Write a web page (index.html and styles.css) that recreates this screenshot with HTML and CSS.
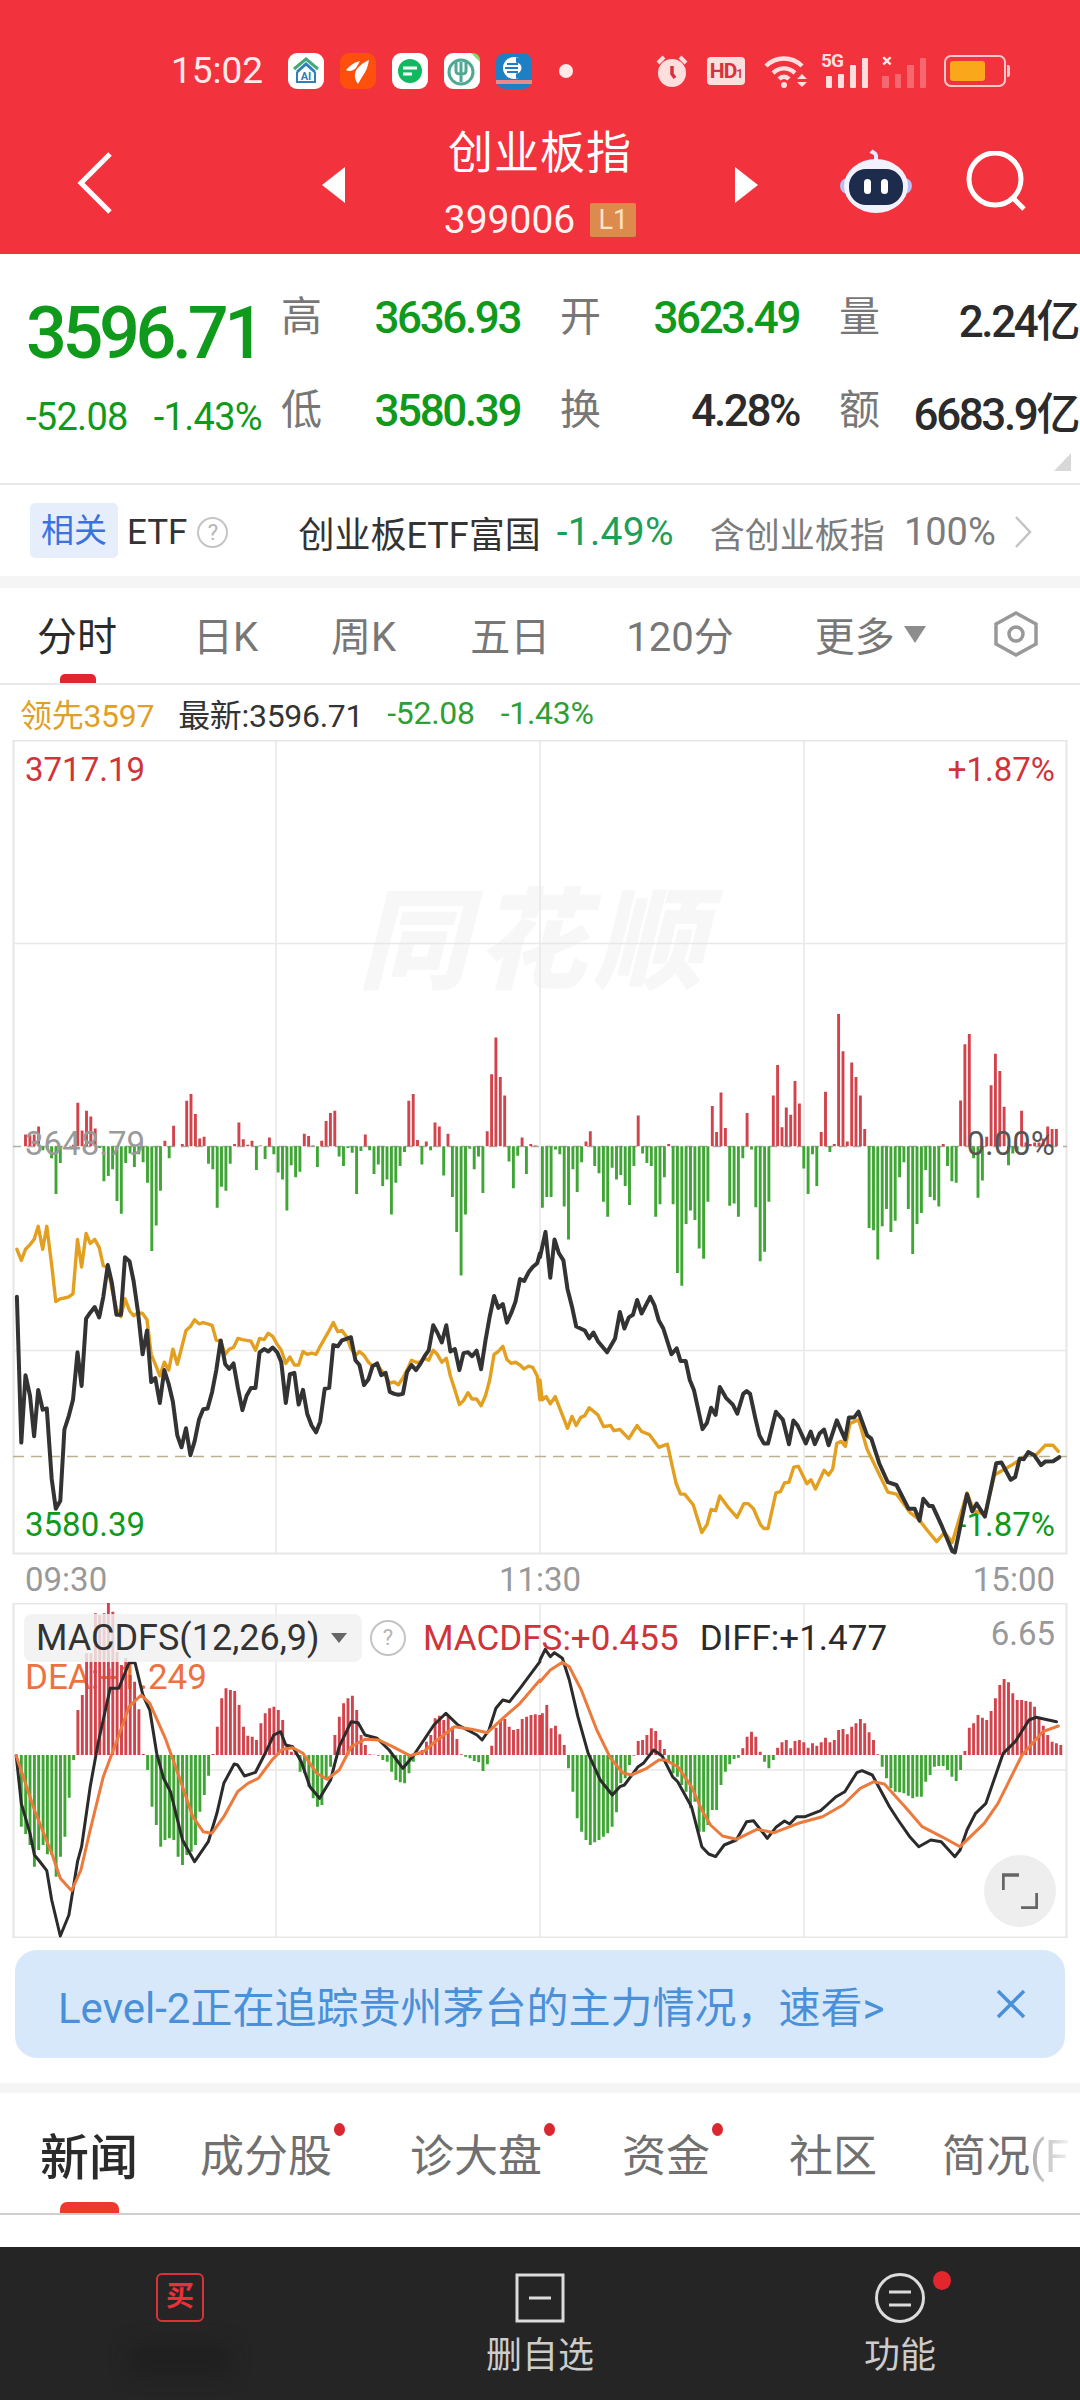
FILE: index.html
```html
<!DOCTYPE html>
<html lang="zh-CN">
<head>
  <meta charset="UTF-8">
  <meta name="viewport" content="width=device-width, initial-scale=1.0">
  <title>创业板指</title>
  <link rel="stylesheet" href="styles.css">
</head>
<body>

  <div class="header">
    <div class="status-bar">
      <span class="status-time">15:02</span>
      <div class="app-icons">
        <svg class="app-icon" viewBox="0 0 36 36">
          <rect class="i-white" width="36" height="36" rx="9"/>
          <path class="i-roof-green" d="M6 16 18 6l12 10"/>
          <path class="i-roof-blue" d="M9 19 18 11l9 8"/>
          <path class="i-box" d="M9 19v10h18V19"/>
          <text class="i-ai" x="18" y="27" text-anchor="middle">AI</text>
        </svg>
        <svg class="app-icon" viewBox="0 0 36 36">
          <rect class="i-orange" width="36" height="36" rx="9"/>
          <path class="i-white" d="M6 17c4-5 9-8 14-9l-4 7c-3 3-7 4-10 2Z"/>
          <path class="i-white" d="M18 31c-4-5-4-11-1-15 3-4 7-7 12-9-1 6-3 12-7 17Z"/>
        </svg>
        <svg class="app-icon" viewBox="0 0 36 36">
          <rect class="i-white" width="36" height="36" rx="9"/>
          <circle class="i-green" cx="18" cy="18" r="12"/>
          <path class="i-bar" d="M11 15h14M11 21h9"/>
        </svg>
        <svg class="app-icon" viewBox="0 0 36 36">
          <rect class="i-white" width="36" height="36" rx="9"/>
          <circle class="i-ring" cx="17" cy="19" r="12"/>
          <path class="i-ring" d="M17 9v20M12 9v9c0 2 2 3 5 3s5-1 5-3V9"/>
          <path class="i-corner" d="M27 0h2a7 7 0 0 1 7 7v2Z"/>
        </svg>
        <svg class="app-icon" viewBox="0 0 36 36">
          <rect class="i-blue" width="36" height="36" rx="9"/>
          <circle class="i-white" cx="18" cy="15" r="11"/>
          <path class="i-swirl" d="M11 11h11M9 15h13M11 19h11"/>
          <path class="i-blue-arc" d="M20 7a8 8 0 0 1 0 16"/>
          <rect class="i-strip" y="27" width="36" height="4"/>
        </svg>
      </div>
      <span class="status-dot"></span>
      <div class="status-right">
        <svg class="st-alarm" viewBox="0 0 32 34">
          <circle class="st-fill" cx="16" cy="19" r="14"/>
          <path class="st-hand" d="M16 12v8l3 4"/>
          <path class="st-ear" d="M2 9 8 3M30 9l-6-6"/>
        </svg>
        <span class="st-hd">HD<small>1</small></span>
        <svg class="st-wifi" viewBox="0 0 45 34">
          <path class="st-arc" d="M2 12C12 2 28 2 38 12"/>
          <path class="st-arc" d="M9 19c7-6 15-6 22 0"/>
          <path class="st-arc" d="M15 25c3-3 7-3 10 0"/>
          <circle class="st-fill" cx="20" cy="31" r="3"/>
          <path class="st-fill" d="M38 20l5 5H33ZM33 28h10l-5 5Z"/>
        </svg>
        <div class="st-signal">
          <span class="st-label">5G</span>
          <i class="s1"></i><i class="s2"></i><i class="s3"></i><i class="s4"></i>
        </div>
        <div class="st-signal off">
          <span class="st-label">×</span>
          <i class="s1"></i><i class="s2"></i><i class="s3"></i><i class="s4"></i>
        </div>
        <div class="st-battery"><span class="st-level"></span></div>
      </div>
    </div>

    <div class="nav-bar">
      <svg class="nav-back" viewBox="0 0 36 64"><path d="M33 3 4 32l29 29"/></svg>
      <div class="nav-center">
        <span class="tri-left"></span>
        <div class="nav-title">
          <div class="stock-name">创业板指</div>
          <div class="stock-code">399006<span class="level-tag">L1</span></div>
        </div>
        <span class="tri-right"></span>
      </div>
      <div class="nav-actions">
        <svg class="robot" viewBox="0 0 72 66">
          <path class="r-ant" d="M36 14V8c0-3-3-3-5-5"/>
          <rect class="r-ear" x="0" y="30" width="72" height="16" rx="8"/>
          <ellipse class="r-head" cx="36" cy="38" rx="32" ry="27"/>
          <rect class="r-face" x="9" y="21" width="54" height="36" rx="17"/>
          <rect class="r-eye" x="24" y="31" width="7" height="15" rx="3.5"/>
          <rect class="r-eye" x="41" y="31" width="7" height="15" rx="3.5"/>
        </svg>
        <svg class="search" viewBox="0 0 60 60"><circle cx="29" cy="28" r="26"/><path d="M47 47l11 11"/></svg>
      </div>
    </div>
  </div>

  <div class="quote">
    <div class="quote-left">
      <div class="price">3596.71</div>
      <div class="change"><span>-52.08</span><span>-1.43%</span></div>
    </div>
    <div class="quote-grid">
      <div class="cell"><span class="lbl">高</span><span class="val green">3636.93</span></div>
      <div class="cell"><span class="lbl">开</span><span class="val green">3623.49</span></div>
      <div class="cell"><span class="lbl">量</span><span class="val">2.24亿</span></div>
      <div class="cell"><span class="lbl">低</span><span class="val green">3580.39</span></div>
      <div class="cell"><span class="lbl">换</span><span class="val">4.28%</span></div>
      <div class="cell"><span class="lbl">额</span><span class="val">6683.9亿</span></div>
    </div>
    <span class="corner-mark"></span>
  </div>

  <div class="etf-row">
    <span class="etf-tag">相关</span>
    <span class="etf-word">ETF</span>
    <span class="help etf-help">?</span>
    <span class="etf-name">创业板ETF富国</span>
    <span class="etf-pct">-1.49%</span>
    <span class="etf-hold">含创业板指</span>
    <span class="etf-share">100%</span>
    <svg class="etf-arrow" viewBox="0 0 20 32"><path d="M3 1l14 15L3 31"/></svg>
  </div>

  <div class="gap"></div>

  <div class="period-tabs">
    <span class="period active">分时</span>
    <span class="period p-day">日K</span>
    <span class="period p-week">周K</span>
    <span class="period p-five">五日</span>
    <span class="period p-120">120分</span>
    <span class="period p-more">更多<i class="more-tri"></i></span>
    <svg class="hex" viewBox="0 0 46 46">
      <path d="M23 2 43 13v20L23 44 3 33V13Z"/>
      <circle cx="23" cy="23" r="7"/>
    </svg>
  </div>

  <div class="info-line">
    <span class="lead">领先3597</span>
    <span class="latest">最新:3596.71</span>
    <span class="info-down">-52.08</span>
    <span class="info-pct">-1.43%</span>
  </div>

  <div class="chart chart-main">
    <div class="watermark">同花顺</div>
    <span class="tag under-line tag-low-pct">-1.87%</span>
    <svg id="mainChart" class="chart-svg" viewBox="0 740 1080 815">
      <rect class="frame" x="13.5" y="740.5" width="1053" height="813"/>
      <path class="grid" d="M276 740V1554M540 740V1554M804 740V1554M13 943.5H1067M13 1350.5H1067"/>
      <path class="mid-line" d="M13 1146.5H1067"/>
      <path class="dash-line" d="M13 1456.5H1067"/>
    </svg>
    <span class="tag tag-high">3717.19</span>
    <span class="tag tag-high-pct">+1.87%</span>
    <span class="tag tag-mid">3648.79</span>
    <span class="tag tag-mid-pct">0.00%</span>
    <span class="tag tag-low">3580.39</span>
  </div>

  <div class="time-axis">
    <span>09:30</span>
    <span>11:30</span>
    <span>15:00</span>
  </div>

  <div class="chart chart-macd">
    <span class="macd-dea">DEA:+1.249</span>
    <svg id="macdChart" class="chart-svg" viewBox="0 1603 1080 335">
      <rect class="frame" x="13.5" y="1603.5" width="1053" height="334"/>
      <path class="grid" d="M276 1603V1937M540 1603V1937M804 1603V1937M13 1770H1067"/>
    </svg>
    <div class="macd-head">
      <span class="macd-pill">MACDFS(12,26,9)<i class="pill-tri"></i></span>
      <span class="help macd-help">?</span>
      <span class="macd-val">MACDFS:+0.455</span>
      <span class="macd-diff">DIFF:+1.477</span>
    </div>
    <span class="macd-max">6.65</span>
    <div class="expand">
      <svg viewBox="0 0 36 36"><path d="M1 17V2h16M35 20v15H19"/></svg>
    </div>
  </div>

  <div class="banner">
    <span class="banner-text">Level-2正在追踪贵州茅台的主力情况，速看&gt;</span>
    <svg class="banner-close" viewBox="0 0 30 30"><path d="M2 2l26 26M28 2 2 28"/></svg>
  </div>

  <div class="gap gap-news"></div>

  <div class="news-tabs">
    <span class="news-tab active">新闻</span>
    <span class="news-tab t-stock dot">成分股</span>
    <span class="news-tab t-zhen dot">诊大盘</span>
    <span class="news-tab t-fund dot">资金</span>
    <span class="news-tab t-comm">社区</span>
    <span class="news-tab t-brief">简况<span class="fade">(F</span></span>
  </div>

  <div class="bottom-space"></div>

  <div class="bottom-bar">
    <div class="bottom-item">
      <span class="buy-icon">买</span>
      <span class="smudge"></span>
    </div>
    <div class="bottom-item">
      <svg class="box-icon" viewBox="0 0 50 50"><rect x="2" y="2" width="46" height="46"/><path d="M14 25h22"/></svg>
      <span class="bottom-label">删自选</span>
    </div>
    <div class="bottom-item">
      <svg class="box-icon" viewBox="0 0 50 50"><circle cx="25" cy="25" r="23.5"/><path d="M14 19h22M14 32h22"/></svg>
      <span class="bottom-label">功能</span>
      <span class="bottom-dot"></span>
    </div>
  </div>

  <script src="chart.js"></script>
</body>
</html>
```

FILE: styles.css
```css
:root {
  --red: #f2323c;
  --green: #0f9a1b;
  --dark: #2b2b2b;
  --gray: #7a7a7a;
  --line: #e9e9e9;
  --strip: #f5f5f5;
}

* {
  box-sizing: border-box;
}

body {
  margin: 0;
  width: 1080px;
  height: 2400px;
  overflow: hidden;
  background: #ffffff;
  color: var(--dark);
  font-family: Roboto, "Noto Sans CJK SC", sans-serif;
}

/* header */
.header {
  height: 254px;
  background: var(--red);
  color: #ffffff;
}

.status-bar {
  display: flex;
  align-items: center;
  height: 108px;
  padding: 34px 0 0 171px;
}

.status-time {
  width: 117px;
  font-size: 37px;
  line-height: 40px;
  color: #ffe9e9;
}

.app-icons {
  display: flex;
  gap: 16px;
}

.app-icon {
  width: 36px;
  height: 36px;
}

.i-white { fill: #ffffff; }
.i-orange { fill: #ff4f0c; }
.i-green { fill: #10b95f; }
.i-blue { fill: #1e80c4; }
.i-strip { fill: #e98a8a; }
.i-corner { fill: #8fcf6e; }
.i-bar { stroke: #ffffff; stroke-width: 3; fill: none; }
.i-roof-green { stroke: #45a878; stroke-width: 3; fill: none; }
.i-roof-blue { stroke: #2f7fb8; stroke-width: 3; fill: none; }
.i-box { stroke: #2f7fb8; stroke-width: 2; fill: none; }
.i-ai { fill: #2f7fb8; font-size: 11px; font-weight: 700; }
.i-ring { stroke: #4fa892; stroke-width: 3; fill: none; }
.i-swirl { stroke: #1e80c4; stroke-width: 2; fill: none; }
.i-blue-arc { stroke: #1e80c4; stroke-width: 5; fill: none; }

.status-dot {
  width: 14px;
  height: 14px;
  margin-left: 27px;
  border-radius: 50%;
  background: #ffe9e9;
}

.status-right {
  display: flex;
  align-items: center;
  margin-left: 83px;
}

.st-alarm {
  width: 32px;
  height: 34px;
}

.st-fill { fill: #ffdede; }
.st-hand { stroke: #d8323c; stroke-width: 3.5; fill: none; }
.st-ear { stroke: #ffdede; stroke-width: 4; fill: none; }
.st-arc { stroke: #ffdede; stroke-width: 4.5; fill: none; }

.st-hd {
  width: 38px;
  height: 28px;
  margin-left: 19px;
  border-radius: 4px;
  background: #ffdede;
  color: #d8323c;
  font-size: 21px;
  line-height: 28px;
  font-weight: 700;
  letter-spacing: -1px;
  text-align: center;
}

.st-hd small {
  font-size: 12px;
}

.st-wifi {
  width: 45px;
  height: 34px;
  margin-left: 19px;
}

.st-signal {
  position: relative;
  display: flex;
  align-items: flex-end;
  gap: 6px;
  width: 47px;
  height: 34px;
  margin-left: 12px;
  padding-left: 5px;
  color: #ffdede;
}

.st-signal i {
  display: block;
  width: 6px;
  background: #ffdede;
  border-radius: 1px;
}

.st-signal .s1 { height: 12px; }
.st-signal .s2 { height: 14px; }
.st-signal .s3 { height: 23px; }
.st-signal .s4 { height: 30px; }

.st-label {
  position: absolute;
  top: -3px;
  left: 0;
  font-size: 19px;
  line-height: 20px;
  font-weight: 700;
  letter-spacing: -1px;
}

.st-signal.off {
  margin-left: 14px;
  padding-left: 0;
  gap: 6px;
  color: #ffe9e9;
}

.st-signal.off i {
  width: 6.5px;
  background: rgba(255, 222, 222, 0.32);
}

.st-battery {
  position: relative;
  width: 62px;
  height: 32px;
  margin-left: 15px;
  padding: 4px;
  border: 2px solid #ffc9c9;
  border-radius: 7px;
}

.st-battery::after {
  content: '';
  position: absolute;
  top: 8px;
  right: -6px;
  width: 3px;
  height: 12px;
  border-radius: 0 2px 2px 0;
  background: #ffc9c9;
}

.st-level {
  display: block;
  width: 35px;
  height: 20px;
  border-radius: 3px;
  background: #fba71b;
}

.nav-bar {
  display: grid;
  grid-template-columns: 1fr 436px 1fr;
  align-items: center;
  height: 146px;
  padding: 0 54px;
}

.nav-back {
  width: 36px;
  height: 64px;
  margin: 4px 0 0 23px;
}

.nav-back path,
.search circle,
.search path {
  fill: none;
  stroke: #ffffff;
  stroke-width: 5;
}

.nav-center {
  display: flex;
  align-items: center;
  justify-content: space-between;
}

.tri-left,
.tri-right {
  width: 0;
  height: 0;
  margin-top: 8px;
  border-top: 18px solid transparent;
  border-bottom: 18px solid transparent;
}

.tri-left { border-right: 23px solid #ffffff; }
.tri-right { border-left: 23px solid #ffffff; }

.nav-title {
  display: flex;
  flex-direction: column;
  align-items: center;
  margin-top: -1px;
}

.stock-name {
  font-size: 45px;
  line-height: 62px;
  letter-spacing: 1px;
}

.stock-code {
  display: flex;
  align-items: center;
  gap: 15px;
  font-size: 39px;
  line-height: 36px;
  margin-top: 17px;
  color: #fff2f2;
}

.level-tag {
  width: 46px;
  height: 34px;
  border-radius: 2px;
  background: #dd8b4d;
  color: #ffe2c6;
  font-size: 27px;
  line-height: 34px;
  text-align: center;
}

.nav-actions {
  display: flex;
  align-items: center;
  justify-content: flex-end;
  gap: 54px;
  margin-top: -1px;
}

.robot {
  width: 72px;
  height: 66px;
}

.r-ant { stroke: #e6e8ff; stroke-width: 4; fill: none; }
.r-ear { fill: #b9bdf5; }
.r-head { fill: #f1f1ff; }
.r-face { fill: #1d2b4d; }
.r-eye { fill: #ffffff; }

.search {
  width: 60px;
  height: 60px;
}

/* quote */
.quote {
  position: relative;
  display: flex;
  height: 231px;
  padding: 18px 0 0 26px;
  border-bottom: 2px solid var(--line);
}

.quote-left {
  width: 255px;
  padding-top: 24px;
}

.price {
  font-size: 72px;
  line-height: 76px;
  font-weight: 500;
  letter-spacing: -4.4px;
  color: var(--green);
}

.change {
  display: flex;
  gap: 26px;
  margin-top: 25px;
  color: var(--green);
  font-size: 38px;
  line-height: 40px;
  letter-spacing: -0.7px;
  white-space: nowrap;
}

.quote-grid {
  display: grid;
  grid-template-columns: repeat(3, 239px);
  grid-auto-rows: 93px;
  column-gap: 40px;
}

.cell {
  display: flex;
  align-items: center;
  justify-content: space-between;
  height: 92px;
}

.lbl {
  font-size: 41px;
  line-height: 52px;
  margin-top: -2px;
  color: #777777;
}

.val {
  font-size: 44px;
  font-weight: 500;
  letter-spacing: -2.4px;
  white-space: nowrap;
}

.green {
  color: var(--green);
}

.corner-mark {
  position: absolute;
  right: 9px;
  bottom: 12px;
  width: 0;
  height: 0;
  border-left: 17px solid transparent;
  border-bottom: 18px solid #d8d8d8;
}

/* etf strip */
.etf-row {
  display: flex;
  align-items: center;
  height: 91px;
  padding-left: 30px;
  font-size: 35px;
  white-space: nowrap;
}

.etf-row > span:not(.etf-tag) {
  margin-top: 3px;
}

.etf-tag {
  width: 88px;
  height: 55px;
  border-radius: 5px;
  background: #e6eefb;
  color: #3b72e0;
  line-height: 55px;
  font-size: 33px;
  text-align: center;
}

.etf-word {
  margin-left: 9px;
  color: #333333;
}

.help {
  display: inline-block;
  border: 2px solid #c4c4c4;
  border-radius: 50%;
  color: #b5b5b5;
  text-align: center;
  font-size: 22px;
}

.etf-help {
  width: 31px;
  height: 31px;
  margin-left: 10px;
  line-height: 27px;
}

.etf-name {
  margin-left: 70px;
  font-size: 36px;
  color: #333333;
}

.etf-pct {
  margin-left: 16px;
  font-size: 39px;
  letter-spacing: 0.3px;
  color: #1c9f58;
}

.etf-hold {
  margin-left: 36px;
  color: #7c7c7c;
}

.etf-share {
  margin-left: 19px;
  font-size: 38px;
  color: #7c7c7c;
}

.etf-arrow {
  width: 20px;
  height: 32px;
  margin: 3px 0 0 17px;
}

.etf-arrow path {
  fill: none;
  stroke: #c4c4c4;
  stroke-width: 2.5;
}

.gap {
  height: 12px;
  background: var(--strip);
}

/* period tabs */
.period-tabs {
  position: relative;
  display: flex;
  align-items: center;
  height: 97px;
  padding: 0 0 3px 37px;
  border-bottom: 2px solid var(--line);
}

.period {
  font-size: 40px;
  color: #777777;
  white-space: nowrap;
}

.period.active {
  color: var(--dark);
}

.period.active::after {
  content: '';
  position: absolute;
  left: 60px;
  bottom: 0;
  width: 36px;
  height: 9px;
  border-radius: 5px 5px 0 0;
  background: #e3262e;
}

.p-day { margin-left: 76px; }
.p-week { margin-left: 73px; }
.p-five { margin-left: 74px; }
.p-120 { margin-left: 76px; }
.p-more { margin-left: 81px; }

.more-tri {
  display: inline-block;
  width: 0;
  height: 0;
  margin: 0 0 8px 9px;
  border-left: 11px solid transparent;
  border-right: 11px solid transparent;
  border-top: 17px solid #8d8d8d;
}

.hex {
  width: 46px;
  height: 46px;
  margin-left: 67px;
}

.hex path,
.hex circle {
  fill: none;
  stroke: #999999;
  stroke-width: 3.5;
}

/* info line */
.info-line {
  display: flex;
  align-items: center;
  height: 55px;
  padding-left: 20px;
  font-size: 32px;
  letter-spacing: -0.3px;
  white-space: nowrap;
}

.lead { color: #e0a028; }
.latest { margin-left: 24px; color: #333333; }
.info-down { margin-left: 24px; color: #2f9e34; }
.info-pct { margin-left: 26px; color: #2f9e34; }

/* charts */
.chart {
  position: relative;
  width: 1080px;
}

.chart-main { height: 815px; }
.chart-macd { height: 335px; }

.chart-svg {
  position: absolute;
  top: 0;
  left: 0;
  z-index: 1;
  width: 1080px;
  height: 100%;
}

.frame {
  fill: none;
  stroke: #e6e6e6;
  stroke-width: 2;
}

.grid {
  fill: none;
  stroke: #e8e8e8;
  stroke-width: 1.5;
}

.mid-line {
  fill: none;
  stroke: #a9b0a8;
  stroke-width: 1.5;
  stroke-dasharray: 8 6;
}

.dash-line {
  fill: none;
  stroke: #bdb08c;
  stroke-width: 1.5;
  stroke-dasharray: 11 7;
}

.bar-up {
  fill: none;
  stroke: #d2434b;
  stroke-width: 2.9;
}

.bar-down {
  fill: none;
  stroke: #3fa535;
  stroke-width: 2.9;
}

.line-price,
.line-avg,
.line-diff,
.line-dea {
  fill: none;
  stroke-linejoin: round;
  stroke-linecap: round;
}

.line-price { stroke: #333333; stroke-width: 4; }
.line-avg { stroke: #e3a020; stroke-width: 3.4; }
.line-diff { stroke: #2b2b2b; stroke-width: 3; }
.line-dea { stroke: #ec7a3c; stroke-width: 3; }

.watermark {
  position: absolute;
  top: 128px;
  left: 358px;
  font-size: 110px;
  line-height: 150px;
  font-weight: 900;
  font-style: italic;
  letter-spacing: 8px;
  color: #f7f7f7;
  white-space: nowrap;
}

.tag {
  position: absolute;
  z-index: 2;
  font-size: 33px;
  line-height: 40px;
}

.under-line {
  z-index: 0;
}

.tag-high { top: 10px; left: 25px; color: #d0343a; }
.tag-high-pct { top: 10px; right: 25px; color: #d0343a; }
.tag-mid { top: 384px; left: 25px; color: #9a9a9a; }
.tag-mid-pct { top: 384px; right: 25px; color: #555555; }
.tag-low { top: 765px; left: 25px; color: var(--green); }
.tag-low-pct { top: 765px; right: 25px; color: var(--green); }

.time-axis {
  display: flex;
  justify-content: space-between;
  align-items: center;
  height: 48px;
  padding: 0 25px;
  font-size: 33px;
  color: #999999;
}

.macd-head {
  position: absolute;
  top: 11px;
  left: 24px;
  z-index: 2;
  display: flex;
  align-items: center;
  font-size: 35px;
  white-space: nowrap;
}

.macd-pill {
  display: flex;
  align-items: center;
  width: 338px;
  height: 48px;
  padding-left: 12px;
  border-radius: 8px;
  background: rgba(240, 240, 240, 0.82);
  color: #333333;
  font-size: 36px;
}

.pill-tri {
  width: 0;
  height: 0;
  margin-left: 11px;
  border-left: 8px solid transparent;
  border-right: 8px solid transparent;
  border-top: 10px solid #666666;
}

.macd-help {
  width: 36px;
  height: 36px;
  margin-left: 8px;
  line-height: 32px;
  border-width: 2.5px;
}

.macd-val {
  margin-left: 17px;
  color: #d0343a;
}

.macd-diff {
  margin-left: 21px;
  color: #2b2b2b;
}

.macd-dea {
  position: absolute;
  top: 55px;
  left: 25px;
  z-index: 0;
  font-size: 35px;
  line-height: 40px;
  color: #ee7240;
}

.macd-max {
  position: absolute;
  top: 11px;
  right: 25px;
  z-index: 2;
  font-size: 33px;
  line-height: 40px;
  color: #999999;
}

.expand {
  position: absolute;
  top: 252px;
  left: 984px;
  z-index: 2;
  display: flex;
  align-items: center;
  justify-content: center;
  width: 72px;
  height: 72px;
  border-radius: 50%;
  background: #eeeeee;
}

.expand svg {
  width: 36px;
  height: 36px;
}

.expand path {
  fill: none;
  stroke: #666666;
  stroke-width: 3.5;
}

/* banner */
.banner {
  display: flex;
  align-items: center;
  justify-content: space-between;
  height: 108px;
  margin: 12px 15px 25px;
  padding: 0 39px 0 43px;
  border-radius: 22px;
  background: #d8e8fb;
}

.banner-text {
  font-size: 42px;
  color: #4a90d9;
  white-space: nowrap;
}

.banner-close {
  width: 30px;
  height: 30px;
}

.banner-close path {
  fill: none;
  stroke: #4a90d9;
  stroke-width: 3.5;
}

.gap-news {
  height: 10px;
}

/* news tabs */
.news-tabs {
  position: relative;
  display: flex;
  align-items: center;
  height: 122px;
  padding: 2px 0 2px 40px;
  border-bottom: 2px solid #cfcfcf;
  overflow: hidden;
  white-space: nowrap;
}

.news-tab {
  position: relative;
  font-size: 44px;
  color: #707070;
}

.news-tab.active {
  font-size: 49px;
  font-weight: 500;
  color: var(--dark);
}

.news-tab.active::after {
  content: '';
  position: absolute;
  left: 20px;
  bottom: -26px;
  width: 59px;
  height: 13px;
  border-radius: 7px 7px 0 0;
  background: #ee3a2c;
}

.news-tab.dot::after {
  content: '';
  position: absolute;
  top: 2px;
  right: -13px;
  width: 11px;
  height: 13px;
  border-radius: 50%;
  background: #d9282f;
}

.t-stock { margin-left: 62px; }
.t-zhen { margin-left: 78px; }
.t-fund { margin-left: 80px; }
.t-comm { margin-left: 79px; }
.t-brief { margin-left: 65px; }

.fade {
  background: linear-gradient(90deg, #aaaaaa, #f2f2f2);
  -webkit-background-clip: text;
  background-clip: text;
  color: transparent;
}

.bottom-space {
  height: 32px;
}

/* bottom bar */
.bottom-bar {
  display: grid;
  grid-template-columns: 360px 360px 360px;
  height: 153px;
  background: #252525;
}

.bottom-item {
  position: relative;
  display: flex;
  flex-direction: column;
  align-items: center;
  padding-top: 26px;
}

.buy-icon {
  width: 48px;
  height: 49px;
  border: 2.5px solid #d8323a;
  border-radius: 6px;
  color: #e8323a;
  font-size: 28px;
  font-weight: 700;
  line-height: 44px;
  text-align: center;
}

.smudge {
  width: 100px;
  height: 30px;
  margin-top: 22px;
  background: #1f1f1f;
  filter: blur(9px);
}

.box-icon {
  width: 50px;
  height: 50px;
}

.box-icon rect,
.box-icon circle,
.box-icon path {
  fill: none;
  stroke: #dcdcdc;
  stroke-width: 3;
}

.bottom-label {
  margin-top: 9px;
  font-size: 36px;
  line-height: 48px;
  color: #cccccc;
}

.bottom-dot {
  position: absolute;
  top: 24px;
  left: 213px;
  width: 18px;
  height: 19px;
  border-radius: 50%;
  background: #e3262e;
}
```

FILE: chart.js
```js
// bar heights and line points are read off the chart in picture units,
// the scale values below turn them into page px
var STEP = 4.356;
var SX = 2.904;
var MAIN_SY = 2.525;
var MAIN_Y0 = 980;
var MACD_SY = 3;
var MACD_Y0 = 1590;

var volAm = [30,28,30,50,-10,-8,-30,-120,-42,0,0,4,110,40,90,75,45,-4,-88,-75,-58,-138,-170,-42,-18,-52,-20,-40,-92,-264,-200,-112,14,-30,52,0,6,115,132,82,20,24,-44,-58,-155,-102,-112,-44,6,60,18,4,14,-60,2,-32,22,-20,-66,-84,-162,-48,-78,-64,32,26,2,-52,14,64,84,90,-26,-50,-4,-16,-120,-12,30,-10,-70,-46,-100,-84,-172,-92,-50,-14,115,132,16,-46,12,-10,60,50,-74,32,-128,-216,-326,-172,-6,-58,-26,-118,38,182,275,175,128,-38,-106,-24,22,-70,6,2];
var volPm = [-155,-128,-128,-8,-20,-152,-235,-58,-115,-40,12,38,-50,-68,-140,-178,-54,-84,-72,-100,-148,-50,78,-18,-42,-50,-178,-146,-78,6,-146,-320,-352,-196,-162,-186,-258,-284,-140,102,36,136,46,-150,-144,-178,-30,84,-8,-154,-290,-266,-140,128,205,48,98,80,165,108,-56,-120,-20,-100,36,138,-14,6,334,240,12,212,175,128,44,-206,-212,-286,-202,-158,-216,-188,-78,-40,-158,-272,-196,-168,-60,-128,-136,-152,6,-50,-88,-92,116,258,284,-30,-130,-86,24,154,234,190,100,-48,-18,-10,90,10,6,10,10,20,50,44,44];

var macdAm = [-215,-237,-270,-335,-285,-270,-298,-300,-365,-305,-245,-128,-15,135,180,305,305,425,420,425,458,430,310,270,290,240,220,137,3,-45,-155,-210,-275,-255,-250,-255,-305,-330,-300,-290,-270,-170,-120,-62,3,85,170,200,195,192,150,85,58,55,45,95,125,140,145,135,105,30,10,5,-50,-55,-95,-130,-155,-150,-75,-35,60,115,155,170,178,135,60,30,2,1,-2,-15,-20,-50,-75,-82,-85,-55,-20,5,15,40,60,110,118,105,120,85,48,2,-5,-10,-18,-22,-48,-28,28,82,105,108,85,75,78,108,115,120,122,120];
var macdPm = [125,150,80,88,62,30,-40,-110,-190,-230,-255,-270,-262,-255,-245,-235,-215,-172,-85,-70,-30,-2,42,45,60,80,72,45,18,-20,-55,-65,-90,-110,-160,-140,-230,-230,-210,-165,-165,-90,-50,-28,-12,-8,20,55,70,55,10,-20,-40,-15,22,38,45,20,42,45,38,22,35,28,38,52,38,45,75,78,62,85,95,108,95,68,45,2,-35,-70,-100,-110,-112,-115,-122,-130,-125,-125,-80,-60,-35,-33,-33,-45,-65,-78,-45,12,82,95,120,112,105,132,170,210,228,218,185,165,165,162,160,145,115,88,60,40,35,30];

var priceAm = [49,800,62,1168,74,998,87,1050,99,1152,111,1035,124,1085,136,1082,150,1260,162,1335,175,1315,187,1135,200,1100,212,1060,225,940,237,1025,250,855,262,840,275,826,288,852,300,800,313,720,325,765,338,845,351,845,363,700,376,710,388,760,401,840,414,945,427,885,439,1015,451,1005,464,1068,477,985,490,1020,502,1065,515,1150,527,1180,540,1132,553,1200,565,1165,578,1110,590,1084,603,1082,616,1040,628,985,641,910,654,970,666,982,678,968,691,1030,704,1086,716,1050,729,1030,742,1030,754,940,767,932,779,938,792,928,805,940,817,965,830,1068,842,995,855,992,867,1072,880,1035,892,1095,905,1125,918,1142,930,1115,943,1032,956,1030,968,922,981,925,993,910,1006,906,1019,902,1032,960,1044,972,1057,1023,1070,1008,1082,975,1095,968,1107,998,1120,992,1132,1040,1145,1045,1157,1047,1170,1045,1182,990,1195,972,1208,985,1220,970,1233,950,1245,935,1258,872,1270,890,1283,915,1296,872,1308,938,1321,932,1334,985,1346,942,1359,940,1371,950,1384,936,1397,983,1410,910,1422,850,1435,798,1447,828,1460,818,1472,865,1485,840,1497,812,1510,755,1522,760,1535,738,1547,725,1560,715,1568,690];
var pricePm = [0,700,16,636,30,752,42,655,55,690,68,708,80,780,93,825,105,875,130,885,143,905,155,890,168,912,195,940,218,905,232,838,245,880,258,852,270,845,282,808,295,842,320,800,332,820,345,860,358,880,382,945,397,930,408,962,423,962,435,1010,447,1035,472,1134,485,1118,497,1080,510,1098,522,1028,540,1055,560,1072,573,1095,590,1045,600,1038,610,1045,625,1105,637,1150,650,1170,662,1170,685,1090,705,1110,723,1172,736,1112,748,1125,772,1170,786,1140,798,1172,812,1145,825,1135,838,1175,862,1112,886,1160,897,1105,912,1105,925,1090,950,1150,962,1158,985,1220,1010,1268,1035,1275,1070,1335,1088,1335,1102,1365,1113,1310,1130,1328,1140,1328,1165,1375,1197,1442,1205,1445,1240,1298,1255,1342,1268,1322,1292,1355,1325,1220,1340,1218,1367,1262,1380,1255,1393,1208,1405,1210,1418,1192,1435,1200,1455,1225,1467,1216,1490,1215,1508,1205];

var avgAm = [49,680,62,708,74,680,87,668,99,655,111,622,124,680,136,622,150,720,162,812,175,805,187,803,200,800,212,792,225,655,237,725,250,640,262,665,275,655,288,675,300,722,313,725,325,780,338,830,351,850,363,805,376,835,388,848,401,840,414,842,427,858,439,945,451,970,464,1000,477,965,490,985,502,932,515,970,527,930,540,885,553,875,565,858,578,868,590,865,603,868,616,872,628,910,641,912,654,945,666,932,678,928,691,905,704,908,716,910,729,912,742,935,754,905,767,908,779,892,792,900,805,920,817,935,830,968,842,952,855,972,867,972,880,938,892,945,905,942,918,945,930,925,943,905,956,885,968,865,981,888,993,885,1006,900,1019,930,1032,948,1044,938,1057,948,1070,965,1082,975,1095,970,1107,985,1120,1000,1132,1018,1145,1015,1157,1022,1170,1005,1182,985,1195,960,1208,965,1220,965,1233,955,1245,960,1258,935,1270,945,1283,965,1296,955,1308,1000,1321,1035,1334,1072,1346,1062,1359,1042,1371,1058,1384,1058,1397,1075,1410,1050,1422,1010,1435,945,1447,938,1460,925,1472,958,1485,968,1497,965,1510,972,1522,982,1535,975,1547,978,1560,1000,1568,1060];
var avgPm = [0,1010,6,1060,18,1052,30,1070,44,1052,68,1105,80,1132,93,1102,105,1125,118,1105,130,1100,143,1080,168,1098,185,1128,205,1125,215,1138,232,1135,258,1158,282,1125,295,1140,318,1148,345,1180,370,1172,395,1270,408,1298,420,1298,445,1325,470,1395,485,1375,497,1337,510,1340,522,1303,548,1333,572,1357,592,1322,605,1322,620,1335,640,1375,650,1385,662,1385,685,1295,698,1292,710,1270,723,1268,737,1230,750,1228,775,1272,787,1262,800,1285,825,1238,838,1250,850,1235,862,1170,875,1165,887,1178,900,1120,925,1110,950,1185,975,1230,1010,1293,1035,1298,1075,1345,1100,1362,1125,1390,1152,1418,1175,1395,1197,1420,1240,1295,1260,1340,1292,1350,1320,1250,1370,1225,1405,1205,1420,1195,1440,1200,1467,1175,1490,1175,1505,1190];

var diffAm = [47,497,62,640,87,730,100,795,112,810,136,842,150,930,175,1038,200,975,225,815,237,770,262,590,285,460,320,295,345,295,375,218,392,218,415,315,435,360,455,490,475,565,495,605,530,750,565,815,605,755,630,670,650,580,680,522,690,525,710,558,742,547,770,490,795,435,815,425,830,465,850,470,875,515,900,590,928,625,960,570,985,470,1020,395,1040,398,1060,435,1095,445,1130,480,1170,535,1200,498,1260,405,1295,370,1330,405,1385,435,1400,450,1420,420,1440,355,1460,330,1480,335,1510,295,1568,215];
var diffPm = [0,210,15,178,30,200,42,188,65,205,85,270,110,380,140,490,175,570,210,615,232,590,245,585,285,530,300,520,330,480,355,498,385,560,400,575,440,650,470,770,490,792,510,800,535,765,570,750,600,695,620,692,660,745,685,712,710,693,725,702,745,680,770,680,815,662,830,648,860,620,885,605,920,548,935,542,965,555,1015,650,1040,690,1075,742,1100,770,1135,750,1165,755,1205,800,1220,780,1240,720,1265,670,1295,640,1345,490,1380,455,1420,390,1440,382,1500,395];

var deaAm = [47,497,100,660,150,790,175,865,208,902,235,840,262,720,300,560,340,450,375,350,410,315,435,340,480,445,520,560,560,680,590,725,615,730,650,680,690,605,720,580,750,565,790,510,820,478,850,473,880,490,920,550,950,568,985,540,1020,470,1060,448,1100,450,1140,470,1190,497,1230,485,1270,450,1320,410,1370,418,1415,428,1460,385,1510,340,1568,270];
var deaPm = [0,275,30,240,65,217,85,230,120,300,165,420,205,505,240,548,265,555,310,535,345,510,365,510,400,530,440,590,470,660,495,705,530,738,570,748,630,718,680,728,750,700,820,680,880,645,930,595,970,575,1000,582,1060,650,1110,710,1170,742,1220,770,1290,700,1330,640,1400,495,1460,425,1505,408];

function addPath(svg, cls, d) {
  var el = document.createElementNS('http://www.w3.org/2000/svg', 'path');
  el.setAttribute('class', cls);
  el.setAttribute('d', d);
  svg.appendChild(el);
}

function barPaths(values, startX, baseY, sy) {
  var up = '';
  var down = '';
  values.forEach(function (v, i) {
    if (v === 0) return;
    var seg = 'M' + (startX + i * STEP).toFixed(1) + ' ' + baseY + 'V' + (baseY - v / sy).toFixed(1);
    if (v > 0) up += seg;
    else down += seg;
  });
  return { up: up, down: down };
}

function drawBars(svg, am, pm, amX, baseY, sy) {
  var a = barPaths(am, amX, baseY, sy);
  var b = barPaths(pm, 542.4, baseY, sy);
  addPath(svg, 'bar-up', a.up + b.up);
  addPath(svg, 'bar-down', a.down + b.down);
}

function linePath(am, pm, y0, sy) {
  var d = '';
  function walk(list, offset) {
    for (var i = 0; i < list.length; i += 2) {
      d += (d ? 'L' : 'M') + (offset + list[i] / SX).toFixed(1) + ' ' + (y0 + list[i + 1] / sy).toFixed(1);
    }
  }
  walk(am, 0);
  walk(pm, 540);
  return d;
}

var mainChart = document.getElementById('mainChart');
drawBars(mainChart, volAm, volPm, 25.5, 980 + 420 / MAIN_SY, MAIN_SY);
addPath(mainChart, 'line-avg', linePath(avgAm, avgPm, MAIN_Y0, MAIN_SY));
addPath(mainChart, 'line-price', linePath(priceAm, pricePm, MAIN_Y0, MAIN_SY));

var macdChart = document.getElementById('macdChart');
drawBars(macdChart, macdAm, macdPm, 21.3, MACD_Y0 + 495 / MACD_SY, MACD_SY);
addPath(macdChart, 'line-diff', linePath(diffAm, diffPm, MACD_Y0, MACD_SY));
addPath(macdChart, 'line-dea', linePath(deaAm, deaPm, MACD_Y0, MACD_SY));
```
